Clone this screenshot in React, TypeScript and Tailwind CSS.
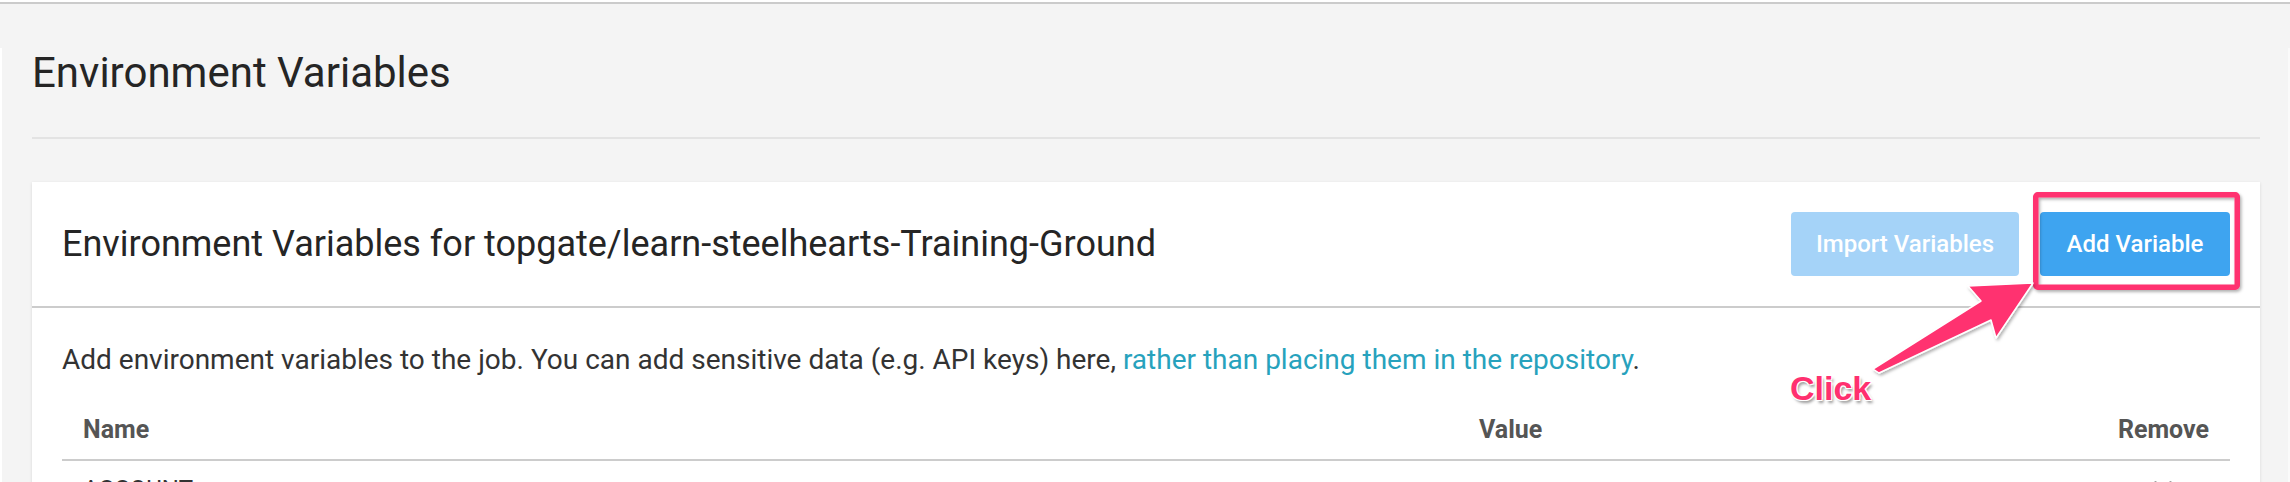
import React from 'react';
import { X } from 'lucide-react';

// Pink annotation drawn over the screenshot (rectangle + arrow)
function Annotation() {
  return (
    <>
      <svg
        className="pointer-events-none absolute left-0 top-0"
        width="2290"
        height="482"
        viewBox="0 0 2290 482"
      >
        <defs>
          <filter id="shadow" x="-20%" y="-20%" width="140%" height="140%">
            <feDropShadow dx="1.5" dy="2" stdDeviation="1.5" floodColor="#000" floodOpacity="0.3" />
          </filter>
        </defs>
        <rect
          x="2035.75"
          y="194.75"
          width="201.5"
          height="92.5"
          rx="2"
          fill="none"
          stroke="#ff306f"
          strokeWidth="5.5"
          filter="url(#shadow)"
        />
        <polygon
          points="1873,369 1981,301 1968,286 2033,283 1996,338 1991,320 1879,373"
          fill="#ff306f"
          stroke="#ffffff"
          strokeWidth="1.5"
          strokeLinejoin="round"
          filter="url(#shadow)"
        />
      </svg>
      <div className="pointer-events-none absolute left-[1790px] top-[371px] font-['Liberation_Sans',Arial,sans-serif] text-[34px] font-bold leading-[34px] text-[#ff306f] [text-shadow:1px_1px_0_#fff,-1px_-1px_0_#fff,1px_-1px_0_#fff,-1px_1px_0_#fff,2px_3px_3px_rgba(0,0,0,0.4)]">
        Click
      </div>
    </>
  );
}

export default function App() {
  return (
    <div className="relative h-[482px] w-[2290px] overflow-hidden bg-[#f4f4f4] font-['Roboto',sans-serif]">
      <div className="h-[2px] bg-white" />
      <div className="h-[2px] bg-[#cbcbcb]" />

      <main className="border-l-2 border-r-2 border-l-white border-r-[#fafafa] pl-[30px] pr-[28px]">
        <h1 className="mt-[44px] text-[42px] leading-[50px] text-[#252525]">Environment Variables</h1>
        <div className="mt-[39px] h-[2px] bg-[#e3e3e3]" />

        <section className="mt-[43px] bg-white shadow-[0_1px_3px_rgba(0,0,0,0.12)]">
          <header className="flex items-center justify-between border-b-2 border-[#cccccc] px-[30px] py-[30px]">
            <h2 className="text-[36px] leading-[44px] text-[#252525]">
              Environment Variables for topgate/learn-steelhearts-Training-Ground
            </h2>
            <div className="flex gap-[21px]">
              <button className="h-[64px] w-[228px] rounded-[4px] bg-[#a5d3f8] text-[24px] font-medium text-white">
                Import Variables
              </button>
              <button className="h-[64px] w-[190px] rounded-[4px] bg-[#3ea4f0] text-[24px] font-medium text-white">
                Add Variable
              </button>
            </div>
          </header>

          <div className="px-[30px] pt-[34px] pb-[20px]">
            <p className="text-[28px] leading-[36px] text-[#333333]">
              Add environment variables to the job. You can add sensitive data (e.g. API keys) here,{' '}
              <a className="text-[#27a2bd]">rather than placing them in the repository</a>.
            </p>

            <div className="mt-[19px] grid grid-cols-[1396px_1fr_auto] text-[25px] leading-[36px]">
              <div className="border-b-2 border-[#cccccc] px-[21px] pt-[15px] pb-[11px] font-bold text-[#555555]">Name</div>
              <div className="border-b-2 border-[#cccccc] px-[21px] pt-[15px] pb-[11px] font-bold text-[#555555]">Value</div>
              <div className="border-b-2 border-[#cccccc] px-[21px] pt-[15px] pb-[11px] text-right font-bold text-[#555555]">
                Remove
              </div>

              <div className="px-[21px] pt-[10px] text-[24px] text-[#333333]">ACCOUNT</div>
              <div className="px-[21px] pt-[10px]" />
              <div className="flex justify-center px-[21px] pt-[14px]">
                <X size={30} strokeWidth={2} className="text-[#777777]" />
              </div>
            </div>
          </div>
        </section>
      </main>

      <Annotation />
    </div>
  );
}
